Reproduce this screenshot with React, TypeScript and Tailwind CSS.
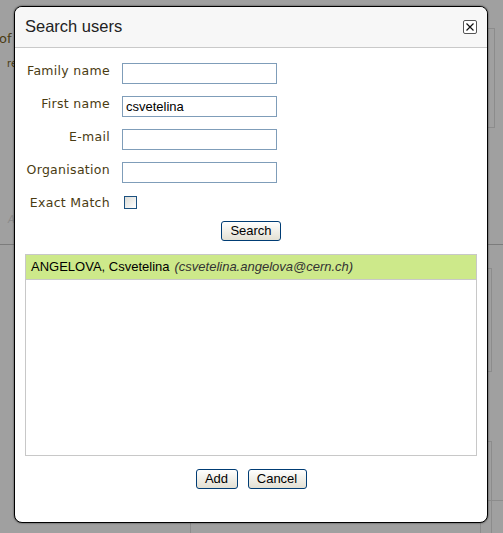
const labelCls = "text-right text-[12.5px] leading-[12px] tracking-[0.3px] text-[#4a3c12] font-['DejaVu_Sans',sans-serif] pt-[2px]"
const inputCls = "w-[155px] h-[21px] border border-[#7f9db9] bg-white px-[3px] text-[13px] text-black outline-none font-['Liberation_Sans',Arial,sans-serif]"
const btnCls = "h-[20px] border border-[#003c74] rounded-[3px] bg-gradient-to-b from-white to-[#e3e0d3] text-[13px] leading-[18px] text-black font-['Liberation_Sans',Arial,sans-serif]"

const fields = [
  { label: "Family name", value: "" },
  { label: "First name", value: "csvetelina" },
  { label: "E-mail", value: "" },
  { label: "Organisation", value: "" },
]

const App = () => {
  return (
    <div className="relative w-[503px] h-[533px] bg-[#a0a0a0] overflow-hidden">
      {/* page behind the dialog */}
      <span className="absolute left-[-1px] top-[29px] text-[13px] text-[#4a3c12] font-['DejaVu_Sans',sans-serif]">of</span>
      <span className="absolute left-[7px] top-[56px] text-[10px] text-[#4a3c12] font-['DejaVu_Sans',sans-serif]">re</span>
      <span className="absolute left-[8px] top-[212px] text-[10px] italic text-[#8a8a8a] font-['DejaVu_Sans',sans-serif]">A</span>
      <div className="absolute left-0 top-[244px] w-[503px] h-px bg-[#7c7c7c]"></div>
      <div className="absolute left-[480px] top-[28px] w-[15px] h-[100px] border border-[#8c8c8c]"></div>
      <div className="absolute left-[480px] top-[268px] w-[12px] h-[104px] border border-[#8c8c8c]"></div>
      <div className="absolute left-[480px] top-[441px] w-[12px] h-[120px] border border-[#8c8c8c]"></div>
      <div className="absolute left-[190px] top-[500px] w-[320px] h-[60px] border border-[#8c8c8c]"></div>

      {/* dialog */}
      <div className="absolute left-[14px] top-[6px] w-[474px] h-[517px] bg-white border border-black rounded-[8px] overflow-hidden shadow-[0_0_2px_rgba(0,0,0,0.7)] flex flex-col">
        <div className="h-[41px] shrink-0 bg-[#f7f7f7] border-b border-[#c9c9c9] flex items-center justify-between pl-[10px] pr-[10px] pb-[2px]">
          <span className="text-[16.5px] text-[#222] font-['Liberation_Sans',Arial,sans-serif]">Search users</span>
          <button className="w-[14px] h-[14px] mt-[2px] border border-[#555] rounded-[2px] bg-white flex items-center justify-center">
            <svg width="10" height="10" viewBox="0 0 10 10">
              <path d="M1.5 1.5 L8.5 8.5 M8.5 1.5 L1.5 8.5" stroke="#111" strokeWidth="1.2" />
            </svg>
          </button>
        </div>

        <div className="flex flex-col px-[10px] pt-[15px]">
          <div className="grid grid-cols-[85px_155px] gap-x-[12px] gap-y-[12px] items-start">
            {fields.map((f) => (
              <div key={f.label} className="contents">
                <label className={labelCls}>{f.label}</label>
                <input className={inputCls} defaultValue={f.value} />
              </div>
            ))}
            <label className={labelCls}>Exact Match</label>
            <div className="h-[14px] pt-[1px] pl-[2px]">
              <div className="w-[13px] h-[13px] border border-[#1c5180] bg-gradient-to-br from-[#dcdcd7] to-white"></div>
            </div>
          </div>

          <div className="flex justify-center mt-[12px]">
            <button className={btnCls + " w-[60px]"}>Search</button>
          </div>

          <div className="mt-[13px] h-[202px] border border-[#c8c8c8]">
            <div className="h-[25px] bg-[#cde98a] border-b border-[#c8c8c8] flex items-center px-[5px] text-[13px] font-['Liberation_Sans',Arial,sans-serif] whitespace-nowrap">
              <span className="text-black">ANGELOVA, Csvetelina</span>
              <span className="ml-[5px] italic text-[#333]">(csvetelina.angelova@cern.ch)</span>
            </div>
          </div>

          <div className="flex justify-center gap-[10px] mt-[13px]">
            <button className={btnCls + " w-[42px]"}>Add</button>
            <button className={btnCls + " w-[59px]"}>Cancel</button>
          </div>
        </div>
      </div>
    </div>
  )
}

export default App
